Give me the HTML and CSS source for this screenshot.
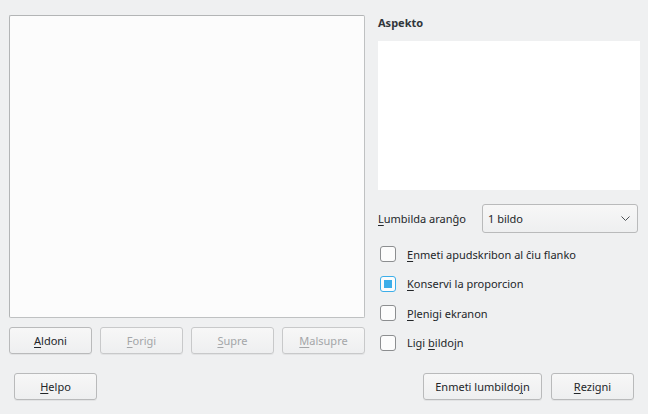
FILE: index.html
```html
<!DOCTYPE html>
<html>
<head>
<meta charset="utf-8">
<link rel="stylesheet" href="styles.css">
</head>
<body>
<div class="dialog">
  <div class="top">
    <div class="left">
      <div class="list"></div>
      <div class="btnrow">
        <button class="btn"><u>A</u>ldoni</button>
        <button class="btn disabled"><u>F</u>origi</button>
        <button class="btn disabled"><u>S</u>upre</button>
        <button class="btn disabled"><u>M</u>alsupre</button>
      </div>
    </div>
    <div class="right">
      <div class="heading">Aspekto</div>
      <div class="preview"></div>
      <div class="combo-row">
        <span class="label"><u>L</u>umbilda aranĝo</span>
        <div class="combo">
          <span>1 bildo</span>
          <svg class="chev" width="9" height="5" viewBox="0 0 9 5"><path d="M0.5 0.5 L4.5 4.5 L8.5 0.5" fill="none" stroke="#4d5154" stroke-width="1"/></svg>
        </div>
      </div>
      <div class="checks">
        <div class="check"><span class="box"></span><span><u>E</u>nmeti apudskribon al ĉiu flanko</span></div>
        <div class="check"><span class="box on"></span><span><u>K</u>onservi la proporcion</span></div>
        <div class="check"><span class="box"></span><span><u>P</u>lenigi ekranon</span></div>
        <div class="check"><span class="box"></span><span>Ligi <u>b</u>ildojn</span></div>
      </div>
    </div>
  </div>
  <div class="bottom">
    <button class="btn"><u>H</u>elpo</button>
    <div class="spacer"></div>
    <button class="btn wide">Enmeti lumbildo<u>j</u>n</button>
    <button class="btn"><u>R</u>ezigni</button>
  </div>
</div>
</body>
</html>
```
FILE: styles.css
```css
html, body {
  margin: 0;
  padding: 0;
  background: #eff0f1;
  width: 648px;
  height: 414px;
  overflow: hidden;
}
body {
  font-family: "Noto Sans", sans-serif;
  font-size: 11px;
  color: #232629;
}
u {
  text-decoration: underline;
  text-underline-offset: 2px;
  text-decoration-thickness: 1px;
}
.dialog {
  display: flex;
  flex-direction: column;
}
.top {
  display: flex;
  gap: 13px;
  margin: 15px 8px 0 9px;
}
.left {
  width: 356px;
  display: flex;
  flex-direction: column;
}
.list {
  height: 303px;
  box-sizing: border-box;
  background: #fcfcfc;
  border: 1px solid #bfc1c2;
  border-top-color: #b3b5b6;
  border-left-color: #b3b5b6;
  border-radius: 2px;
}
.btnrow {
  display: flex;
  gap: 8px;
  margin-top: 9px;
}
.btn {
  width: 83px;
  height: 27px;
  box-sizing: border-box;
  border: 1px solid #b9babb;
  border-radius: 3px;
  background: linear-gradient(#f7f7f7, #eeeff0);
  box-shadow: 0 1px 0 rgba(0,0,0,0.05);
  font-family: "Noto Sans", sans-serif;
  font-size: 11px;
  color: #232629;
  padding: 0;
  text-align: center;
}
.btn.disabled {
  color: #a4a6a8;
  border-color: #c8c9ca;
}
.btn.wide {
  width: 119px;
}
.right {
  width: 262px;
  display: flex;
  flex-direction: column;
}
.heading {
  font-size: 11px;
  font-weight: bold;
  line-height: 15px;
  color: #31363b;
  margin-bottom: 11px;
}
.preview {
  height: 149px;
  background: #ffffff;
}
.combo-row {
  display: flex;
  align-items: center;
  margin-top: 14px;
  margin-right: 2px;
  height: 29px;
}
.label {
  width: 104px;
  flex: none;
}
.combo {
  flex: 1;
  height: 29px;
  box-sizing: border-box;
  border: 1px solid #b9babb;
  border-radius: 3px;
  background: linear-gradient(#f7f7f7, #eeeff0);
  display: flex;
  align-items: center;
  justify-content: space-between;
  padding: 0 7px 0 5px;
}
.chev {
  display: block;
}
.checks {
  display: flex;
  flex-direction: column;
  gap: 13.6px;
  margin-top: 13px;
  padding-left: 2px;
}
.check {
  display: flex;
  align-items: center;
  gap: 11px;
  height: 16px;
}
.box {
  width: 16px;
  height: 16px;
  box-sizing: border-box;
  border: 1px solid #8c8e90;
  border-radius: 3px;
  background: #fcfcfc;
  flex: none;
  position: relative;
}
.box.on {
  border-color: #3daee9;
}
.box.on::after {
  content: "";
  position: absolute;
  left: 3px;
  top: 3px;
  width: 8px;
  height: 8px;
  background: #3daee9;
}
.bottom {
  display: flex;
  gap: 9px;
  margin-top: 19px;
  padding: 0 14px;
}
.spacer {
  flex: 1;
}
```
